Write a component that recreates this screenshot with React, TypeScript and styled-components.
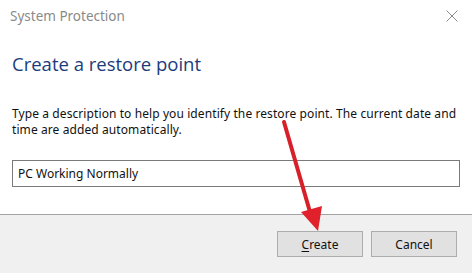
import React from 'react';
import styled, { createGlobalStyle } from 'styled-components';

const GlobalStyle = createGlobalStyle`
    html, body {
        margin: 0;
        padding: 0;
        background: #fff;
    }
    body {
        font-family: 'Open Sans', 'Noto Sans', Arial, sans-serif;
    }
`;

const Window = styled.div`
    position: relative;
    width: 472px;
    height: 273px;
    background: #fff;
    display: flex;
    flex-direction: column;
    overflow: hidden;
`;

const TitleBar = styled.header`
    height: 31px;
    display: flex;
    align-items: center;
    justify-content: space-between;
    padding: 0 14px 0 10px;
    color: #8a8a8a;
    font-family: 'Noto Sans', sans-serif;
    font-size: 13.5px;
`;

const CloseButton = styled.span`
    display: inline-flex;
    width: 12px;
    height: 12px;
`;

const Body = styled.div`
    flex: 1;
    padding: 20px 13px 0 12px;
    display: flex;
    flex-direction: column;
`;

const Heading = styled.h1`
    margin: 0 0 29px;
    font-size: 18.5px;
    font-weight: 400;
    line-height: 26px;
    color: #1c3b7a;
`;

const Description = styled.p`
    margin: 0 0 22px;
    font-family: 'Noto Sans', sans-serif;
    font-size: 12px;
    letter-spacing: 0.09px;
    line-height: 16px;
    color: #111;
`;

const TextInput = styled.input`
    box-sizing: border-box;
    width: 448px;
    height: 27px;
    border: 1px solid #7a7a7a;
    padding: 0 5px;
    font-family: 'Noto Sans', sans-serif;
    font-size: 12px;
    color: #111;
    background: #fff;
    outline: none;
`;

const Footer = styled.footer`
    box-sizing: border-box;
    height: 59px;
    border-top: 1px solid #a3a3a3;
    background: #f0f0f0;
    display: flex;
    justify-content: flex-end;
    align-items: flex-start;
    gap: 8px;
    padding: 16px 15px 0 0;
`;

const Button = styled.button`
    box-sizing: border-box;
    width: 86px;
    height: 26px;
    background: #e1e1e1;
    border: 1px solid #adadad;
    font-family: 'Noto Sans', sans-serif;
    font-size: 12px;
    color: #111;
    padding: 0;

    u {
        text-decoration-thickness: 1px;
        text-underline-offset: 2px;
    }
`;

const Arrow = styled.svg`
    position: absolute;
    left: 0;
    top: 0;
    pointer-events: none;
`;

const App = () => {
    return (
        <Window>
            <GlobalStyle />
            <TitleBar>
                <span>System Protection</span>
                <CloseButton>
                    <svg width="12" height="12" viewBox="0 0 12 12">
                        <path d="M0.5 0.5 L11.5 11.5 M11.5 0.5 L0.5 11.5" stroke="#8a8a8a" strokeWidth="1" />
                    </svg>
                </CloseButton>
            </TitleBar>
            <Body>
                <Heading>Create a restore point</Heading>
                <Description>
                    Type a description to help you identify the restore point. The current date and time are added
                    automatically.
                </Description>
                <TextInput defaultValue="PC Working Normally" />
            </Body>
            <Footer>
                <Button>
                    <u>C</u>reate
                </Button>
                <Button>Cancel</Button>
            </Footer>
            <Arrow width="472" height="273" viewBox="0 0 472 273">
                <line x1="284" y1="122" x2="310" y2="212" stroke="#d8202a" strokeWidth="4" strokeLinecap="round" />
                <polygon points="301,212 322,206 318,231" fill="#e0202a" />
            </Arrow>
        </Window>
    );
};

export default App;
